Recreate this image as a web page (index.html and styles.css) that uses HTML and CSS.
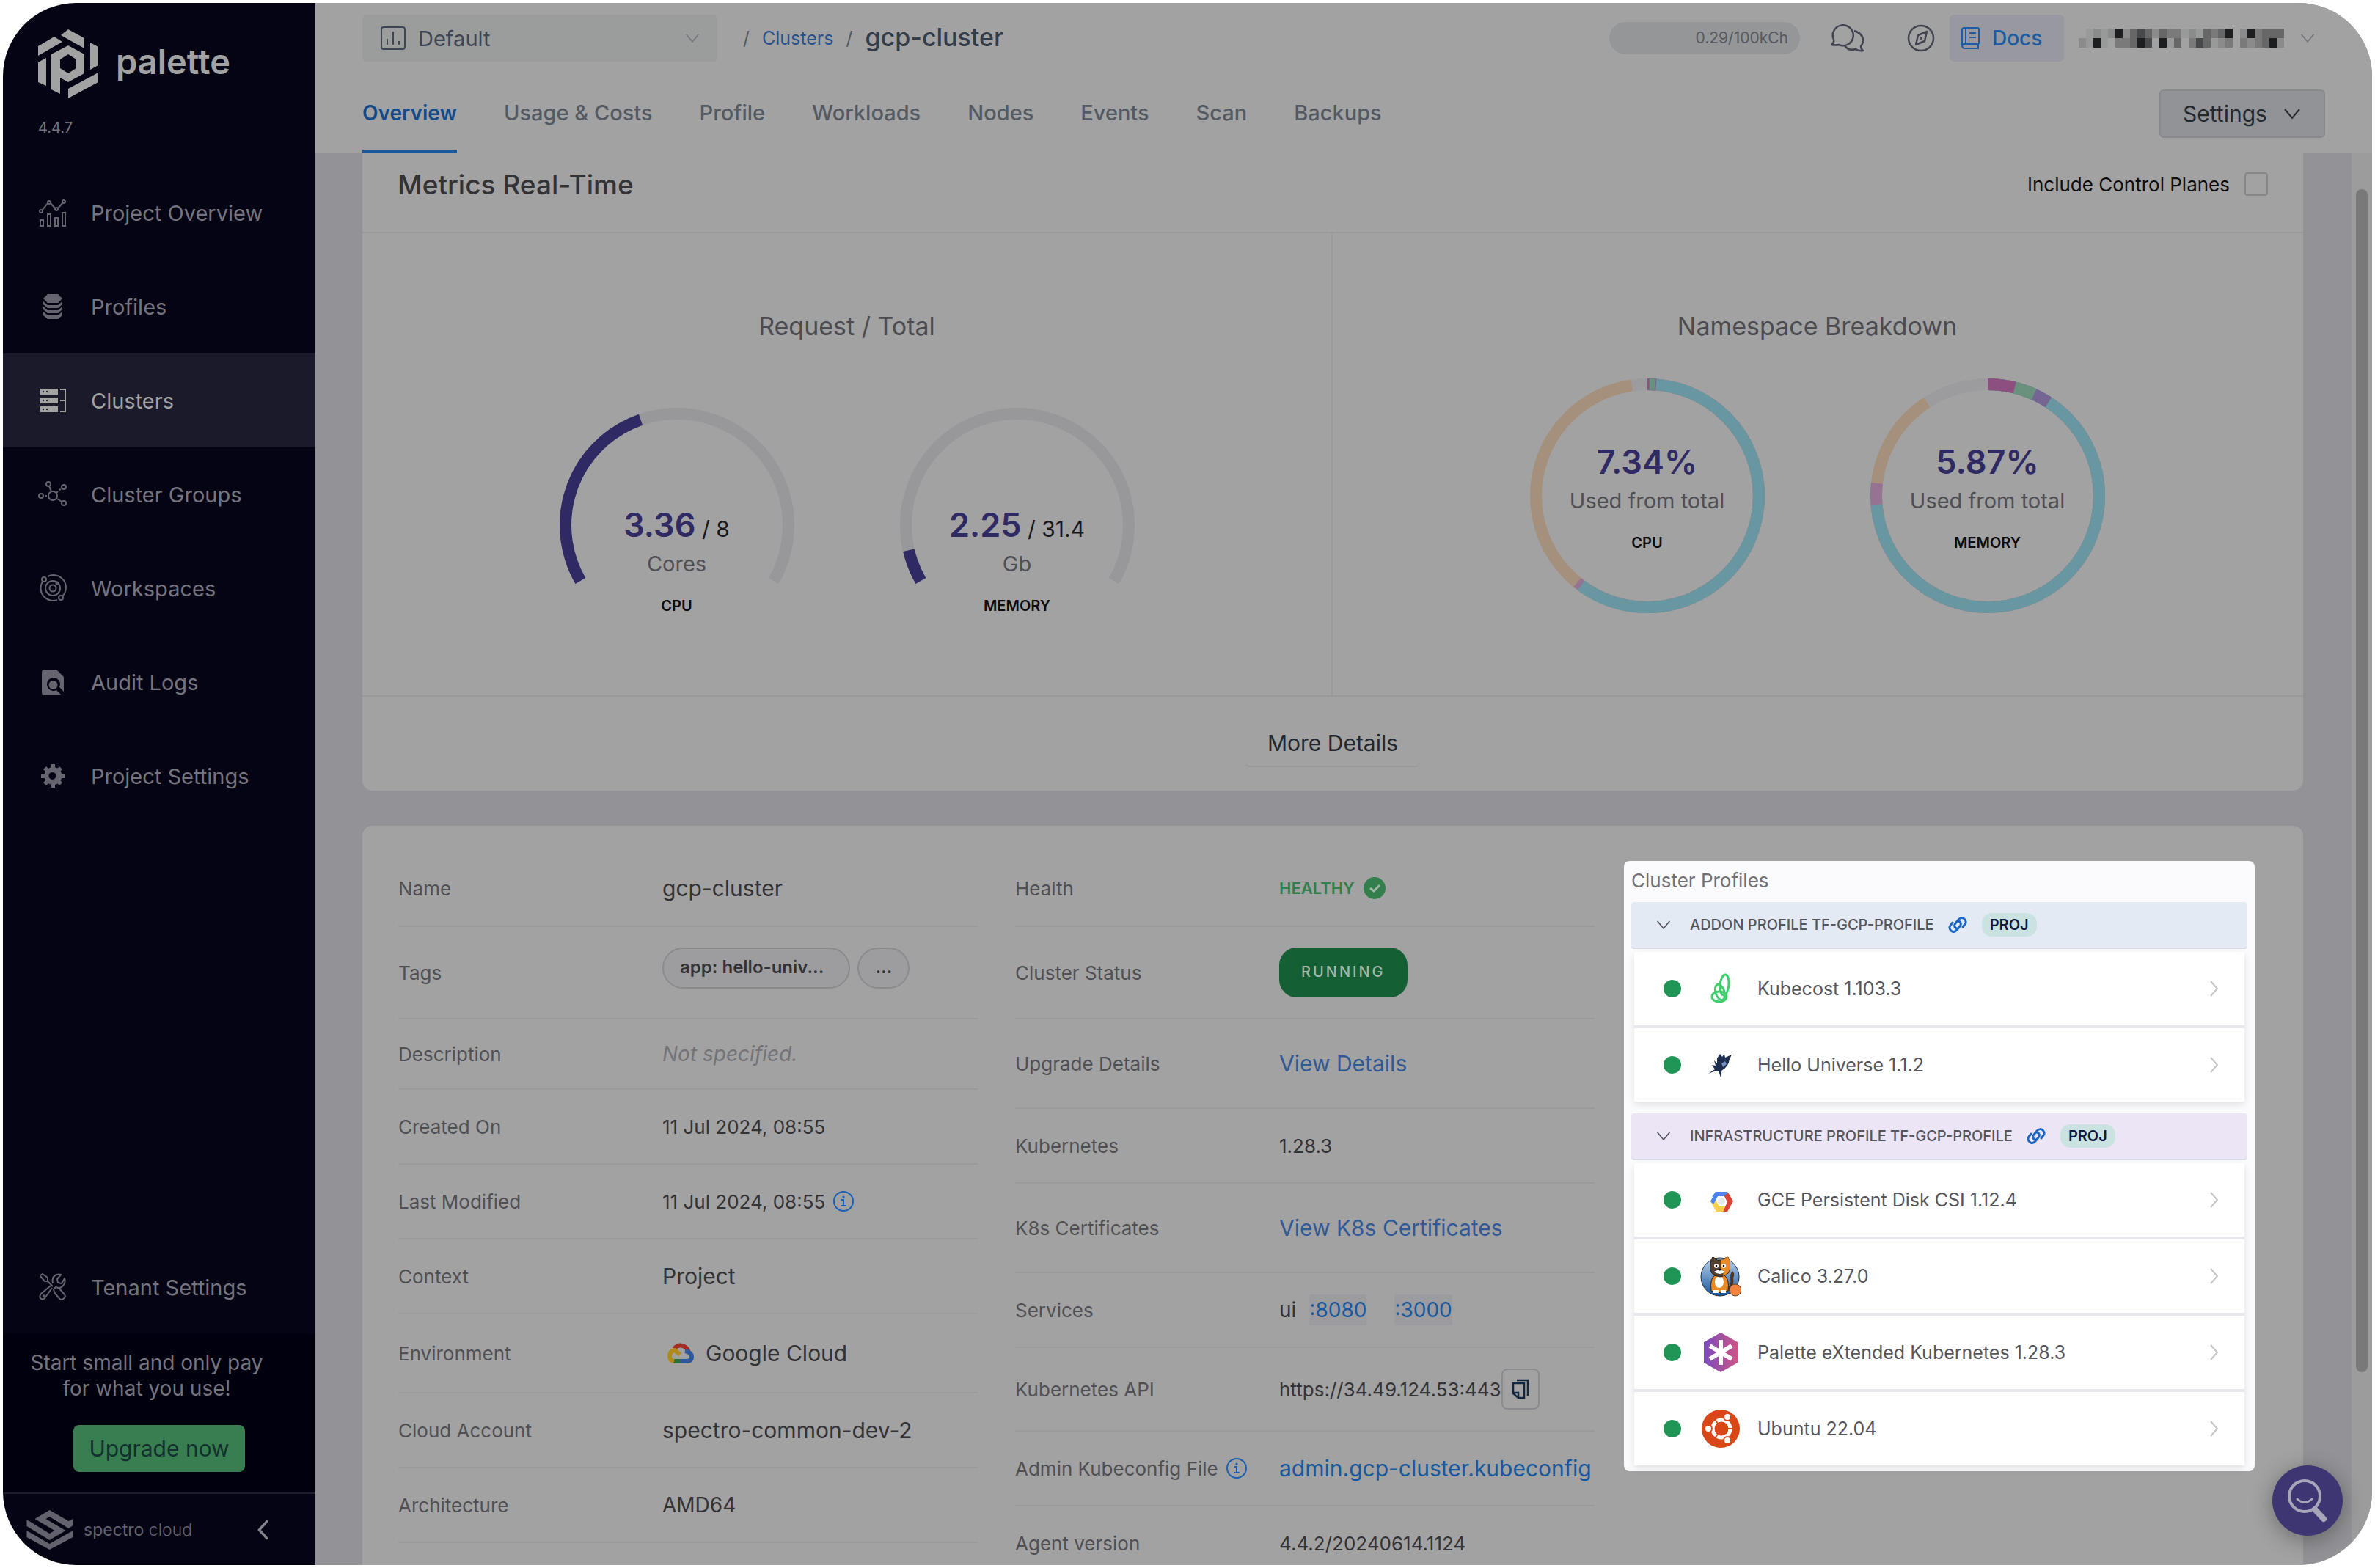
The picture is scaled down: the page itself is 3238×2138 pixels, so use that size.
FILE: index.html
```html
<!DOCTYPE html>
<html lang="en">
<head>
<meta charset="utf-8">
<title>gcp-cluster - Palette</title>
<link rel="stylesheet" href="styles.css">
</head>
<body>
<svg class="sprite" aria-hidden="true">
  <symbol id="chev-down" viewBox="0 0 24 16"><path d="M2 2l10 12L22 2" fill="none" stroke="currentColor" stroke-width="2"/></symbol>
  <symbol id="chev-right" viewBox="0 0 14 24"><path d="M2 2l9 10-9 10" fill="none" stroke="currentColor" stroke-width="2"/></symbol>
  <symbol id="info" viewBox="0 0 30 30"><g fill="none" stroke="currentColor" stroke-width="2"><circle cx="15" cy="15" r="13"/><path d="M12 13h3v8M11 21h8"/></g><circle cx="15" cy="9" r="1.6" fill="currentColor"/></symbol>
  <symbol id="link" viewBox="0 0 28 22"><g fill="none" stroke="currentColor" stroke-width="3" stroke-linecap="round"><path d="M13 16c-4-1-4-5-2-7l4-5c3-3 6-3 8-1s3 5 1 7l-3 4"/><path d="M15 6c4 1 4 5 2 7l-4 5c-3 3-6 3-8 1s-3-5-1-7l3-4"/></g></symbol>
</svg>
<div class="app">
  <aside class="sidebar">
    <div class="brand">
      <svg class="brand-mark" viewBox="0 0 82 94" fill="currentColor" fill-rule="evenodd"><path d="M41 0l22 12v14L31 8zM22 10l11 7L0 36V23zM71 18l11 6v25l-11 6zM82 59v13L41 94V81zM0 45l11-6v38L0 72zM41 22l22 12v26L41 72l-11-6v22l-12-6V34zM41 34l-11 7v12l11 7 11-7V41z"/></svg>
      <span class="brand-name">palette</span>
    </div>
    <div class="version">4.4.7</div>
    <nav class="menu">
      <a href="#"><svg viewBox="0 0 40 40" fill="none" stroke="currentColor" stroke-width="2"><path d="M3 30h4v8H3zM13 22h4v16h-4zM23 27h4v11h-4zM33 20h4v18h-4zM6 16l7-9M17 7l6 7M27 14l7-8"/><circle cx="4" cy="18" r="2"/><circle cx="15" cy="6" r="2"/><circle cx="25" cy="15" r="2"/><circle cx="35" cy="5" r="2"/></svg>Project Overview</a>
      <a href="#"><svg viewBox="0 0 40 40" fill="currentColor"><path d="M13 3h14l6 6-6 6H13L7 9zM7 13l6 5h14l6-5v4l-6 5H13l-6-5zM7 20l6 5h14l6-5v4l-6 5H13l-6-5zM7 27l6 5h14l6-5v5l-6 5H13l-6-5z"/></svg>Profiles</a>
      <a href="#" class="on"><svg viewBox="0 0 40 40"><path fill="currentColor" fill-rule="evenodd" d="M3 4h24v8H3zM6 7v2h2V7zM11 7v2h2V7zM3 16h24v8H3zM6 19v2h2v-2zM11 19v2h2v-2zM3 28h24v8H3zM6 31v2h2v-2zM11 31v2h2v-2z"/><path d="M30 5h7v30h-7M30 20h7" fill="none" stroke="currentColor" stroke-width="2"/></svg>Clusters</a>
      <a href="#"><svg viewBox="0 0 40 40" fill="none" stroke="currentColor" stroke-width="2"><circle cx="20" cy="22" r="6"/><circle cx="4" cy="22" r="3"/><circle cx="14" cy="6" r="3"/><circle cx="35" cy="10" r="3"/><circle cx="35" cy="32" r="3"/><path d="M9 22h3M15 9l3 7M26 26l6 4M25 18l2-2M29 14l2-1"/></svg>Cluster Groups</a>
      <a href="#"><svg viewBox="0 0 40 40" fill="none" stroke="currentColor" stroke-width="2"><circle cx="20" cy="20" r="4.500"/><circle cx="20" cy="20" r="10"/><path d="M13 4a17 17 0 0 1 20 27M26 36A17 17 0 0 1 6 11"/><circle cx="8" cy="8" r="3"/><circle cx="31" cy="33" r="3"/><circle cx="26" cy="13" r="1.500"/></svg>Workspaces</a>
      <a href="#"><svg viewBox="0 0 40 40"><path fill="currentColor" fill-rule="evenodd" d="M9 3h16l10 10v20l-6-6a9 9 0 1 0-4 4l7 7H9q-4 0-4-4V7q0-4 4-4zM20 18a6 6 0 1 0 1 0z"/></svg>Audit Logs</a>
      <a href="#"><svg viewBox="0 0 40 40"><g fill="currentColor"><path fill-rule="evenodd" d="M20 8a12 12 0 1 0 1 0zM20 15a5 5 0 1 1-1 0z"/><path d="M17 4h6v6h-6zM17 30h6v6h-6zM4 17h6v6H4zM30 17h6v6h-6zM7 11l4-4 4 4-4 4zM25 11l4-4 4 4-4 4zM7 29l4-4 4 4-4 4zM25 29l4-4 4 4-4 4z"/></g></svg>Project Settings</a>
    </nav>
    <nav class="menu menu-end">
      <a href="#"><svg viewBox="0 0 40 40" fill="none" stroke="currentColor" stroke-width="2" stroke-linejoin="round"><path d="M3 4l3-2 7 5v5l7 7M13 12H9L3 5M21 23l3-3 4 1 8 9q2 3-1 5.500t-5.500 0.500l-7-8zM19 21L9 35q-3 3-5.500 0.500T4 29l13-11M20 15q-2-9 5-12 4-1 6-0l-5 6 1 5 5 1 4-7q2 6-2 10t-8 4"/><circle cx="8" cy="32" r=".8"/></svg>Tenant Settings</a>
    </nav>
    <div class="promo">
      <p>Start small and only pay<br>for what you use!</p>
      <button type="button" class="upgrade">Upgrade now</button>
    </div>
    <div class="company">
      <svg viewBox="0 0 63 54" class="company-mark"><path fill="currentColor" d="M31 0L11 12l27 16-7 4L0 13v9l31 19 22-13-27-16 5-3 26 16 6-4V12l-6 3zM0 28v9l31 17 32-17v-9L31 46z"/></svg>
      <span class="company-name">spectro <span>cloud</span></span>
      <button type="button" class="collapse" aria-label="Collapse menu"><svg viewBox="0 0 14 24"><path d="M12 2L3 12l9 10" fill="none" stroke="currentColor" stroke-width="3" stroke-linecap="round"/></svg></button>
    </div>
  </aside>

  <main class="main">
    <header class="top">
      <div class="bar">
        <div class="project">
          <svg viewBox="0 0 36 34" fill="none" stroke="currentColor" stroke-width="2" class="project-icon"><rect x="2" y="2" width="32" height="30" rx="3"/><path d="M10 18v8M18 8v18M26 21v5"/></svg>
          <select aria-label="Project"><option>Default</option></select>
          <svg class="chev chev-s faint"><use href="#chev-down"/></svg>
        </div>
        <nav class="crumbs"><span>/</span><a href="#">Clusters</a><span>/</span><strong>gcp-cluster</strong></nav>
        <div class="tools">
          <span class="quota">0.29/100kCh</span>
          <button type="button" class="icon-btn chat" aria-label="Chat"><svg viewBox="0 0 46 38" fill="none" stroke="currentColor" stroke-width="2.500" stroke-linejoin="round"><path d="M1 28q4-3 3-7a14 14 0 1 1 7 7q-4 1-10 0zM32 9q13 4 12 15-1 4-3 6 0 4 3 6-6 1-10-2-10 3-15-5"/></svg></button>
          <button type="button" class="icon-btn compass" aria-label="Explore"><svg viewBox="0 0 38 38" fill="none" stroke="currentColor" stroke-width="2.500"><circle cx="19" cy="19" r="17"/><path d="M27 10l-3 13-12 5 3-13z" stroke-linejoin="round"/><circle cx="19" cy="19" r=".8"/></svg></button>
          <a href="#" class="docs"><svg viewBox="0 0 26 30" fill="none" stroke="currentColor" stroke-width="2"><path d="M24 23V3q0-2-2-2H4Q1 1 1 4v21q0 4 4 4h19M6 2v20M24 23H4q-3 0-3 3M23 23v6M11 8h9M11 14h9"/></svg>Docs</a>
          <svg class="user" viewBox="0 0 28 2" preserveAspectRatio="none" shape-rendering="crispEdges" role="img" aria-label="User"><path fill="#989999" d="M1 0h1v1H1zM1 1h1v1H1zM3 1h1v1H3zM12 1h1v1h-1zM14 0h1v1h-1zM16 0h1v1h-1zM18 1h1v1h-1zM3 0h1v1H3z"/><path fill="#8b8b8c" d="M0 1h1v1H0zM2 0h1v1H2zM4 0h1v1H4zM6 0h1v1H6zM10 0h1v1h-1zM15 0h1v1h-1zM19 1h1v1h-1zM22 0h1v1h-1zM23 1h1v1h-1zM27 1h1v1h-1z"/><path fill="#7a7a7b" d="M5 1h2v1H5zM12 0h2v1h-2zM15 1h1v1h-1zM18 0h1v1h-1zM20 1h1v1h-1zM22 1h1v1h-1zM24 0h1v2h-1z"/><path fill="#676768" d="M7 0h1v2H7zM9 0h1v1H9zM11 0h1v1h-1zM13 1h1v1h-1zM17 0h1v2h-1zM19 0h1v1h-1zM25 0h1v2h-1zM26 0h2v1h-2z"/><path fill="#48494a" d="M8 0h1v1H8zM9 1h1v1H9zM16 1h1v1h-1z"/><path fill="#1d1e1f" d="M5 0h1v1H5zM2 1h1v1H2zM8 1h1v1H8zM11 1h1v1h-1zM20 0h1v1h-1zM23 0h1v1h-1zM26 1h1v1h-1z"/></svg>
          <svg class="chev chev-s faint"><use href="#chev-down"/></svg>
        </div>
      </div>
      <div class="tabs-row">
        <nav class="tabs">
          <a href="#" class="on">Overview</a><a href="#">Usage &amp; Costs</a><a href="#">Profile</a><a href="#">Workloads</a><a href="#">Nodes</a><a href="#">Events</a><a href="#">Scan</a><a href="#">Backups</a>
        </nav>
        <button type="button" class="settings">Settings<svg class="chev"><use href="#chev-down"/></svg></button>
      </div>
    </header>

    <div class="scroll">
      <div class="content">
        <section class="card metrics">
          <div class="metrics-head"><h2>Metrics Real-Time</h2><label class="check">Include Control Planes<input type="checkbox"></label></div>
          <div class="metrics-body">
            <div class="half">
              <h3>Request / Total</h3>
              <div class="dials">
                <div class="dial gauge">
                  <svg viewBox="0 0 320 320" fill="none" stroke-width="16"><g transform="rotate(150 160 160)"><circle cx="160" cy="160" r="152" pathLength="360" stroke="#98989b" stroke-dasharray="240 120"/><circle cx="160" cy="160" r="152" pathLength="360" stroke="#2f2a63" stroke-dasharray="101 259"/></g></svg>
                  <div class="dial-text"><p class="num"><b>3.36</b> / 8</p><p class="unit">Cores</p><p class="kind">CPU</p></div>
                </div>
                <div class="dial gauge">
                  <svg viewBox="0 0 320 320" fill="none" stroke-width="16"><g transform="rotate(150 160 160)"><circle cx="160" cy="160" r="152" pathLength="360" stroke="#98989b" stroke-dasharray="240 120"/><circle cx="160" cy="160" r="152" pathLength="360" stroke="#2f2a63" stroke-dasharray="17 343"/></g></svg>
                  <div class="dial-text"><p class="num"><b>2.25</b> / 31.4</p><p class="unit">Gb</p><p class="kind">MEMORY</p></div>
                </div>
              </div>
            </div>
            <div class="half">
              <h3>Namespace Breakdown</h3>
              <div class="dials dials-ring">
                <div class="dial">
                  <svg viewBox="0 0 320 320" fill="none" stroke-width="16"><g transform="rotate(-90 160 160)"><circle cx="160" cy="160" r="152" stroke="#9c9c9f"/><circle cx="160" cy="160" r="152" pathLength="360" stroke="#a5917b" stroke-dasharray="352 8"/><circle cx="160" cy="160" r="152" pathLength="360" stroke="#967393" stroke-dasharray="219 141"/><circle cx="160" cy="160" r="152" pathLength="360" stroke="#6897a1" stroke-dasharray="216.500 143.500"/><circle cx="160" cy="160" r="152" pathLength="360" stroke="#756593" stroke-dasharray="4.500 355.500"/><circle cx="160" cy="160" r="152" pathLength="360" stroke="#6a917d" stroke-dasharray="4 356"/><circle cx="160" cy="160" r="152" pathLength="360" stroke="#8c4f80" stroke-dasharray="1 359"/></g></svg>
                  <div class="dial-text"><p class="num"><b>7.34%</b></p><p class="unit">Used from total</p><p class="kind">CPU</p></div>
                </div>
                <div class="dial">
                  <svg viewBox="0 0 320 320" fill="none" stroke-width="16"><g transform="rotate(-90 160 160)"><circle cx="160" cy="160" r="152" stroke="#9c9c9f"/><circle cx="160" cy="160" r="152" pathLength="360" stroke="#a5917b" stroke-dasharray="327 33"/><circle cx="160" cy="160" r="152" pathLength="360" stroke="#967393" stroke-dasharray="276.500 83.500"/><circle cx="160" cy="160" r="152" pathLength="360" stroke="#6897a1" stroke-dasharray="265.500 94.500"/><circle cx="160" cy="160" r="152" pathLength="360" stroke="#756593" stroke-dasharray="33 327"/><circle cx="160" cy="160" r="152" pathLength="360" stroke="#6a917d" stroke-dasharray="24.500 335.500"/><circle cx="160" cy="160" r="152" pathLength="360" stroke="#8c4f80" stroke-dasharray="14 346"/></g></svg>
                  <div class="dial-text"><p class="num"><b>5.87%</b></p><p class="unit">Used from total</p><p class="kind">MEMORY</p></div>
                </div>
              </div>
            </div>
          </div>
          <div class="metrics-foot"><button type="button">More Details</button></div>
        </section>

        <section class="card details">
          <dl class="facts">
            <div class="h104"><dt>Name</dt><dd>gcp-cluster</dd></div>
            <div class="h126"><dt>Tags</dt><dd class="tags"><span class="tag-wide">app: hello-univ...</span><span>...</span></dd></div>
            <div class="h96"><dt>Description</dt><dd class="none">Not specified.</dd></div>
            <div><dt>Created On</dt><dd class="digits">11 Jul 2024, 08:55</dd></div>
            <div><dt>Last Modified</dt><dd class="digits">11 Jul 2024, 08:55<svg class="info"><use href="#info"/></svg></dd></div>
            <div><dt>Context</dt><dd>Project</dd></div>
            <div class="h108"><dt>Environment</dt><dd><svg class="gcp" viewBox="0 0 36 28" fill="none" stroke-width="6"><path stroke="#a62c23" d="M9 8q6-7 14-3 5 3 6 8"/><path stroke="#2c579b" d="M24 11q9 2 9 8t-7 6h-8"/><path stroke="#27713c" d="M18 25H8"/><path stroke="#b18a1c" d="M9 25q-6-1-6-7 0-7 7-8l7 6"/></svg>Google Cloud</dd></div>
            <div><dt>Cloud Account</dt><dd>spectro-common-dev-2</dd></div>
            <div><dt>Architecture</dt><dd class="mid">AMD64</dd></div>
          </dl>
          <dl class="facts">
            <div class="h104"><dt>Health</dt><dd class="healthy">HEALTHY<svg viewBox="0 0 30 30"><circle cx="15" cy="15" r="15" fill="#327f4b"/><path d="M9 15l5 4 8-8" fill="none" stroke="#a0b5a6" stroke-width="3"/></svg></dd></div>
            <div class="h126"><dt>Cluster Status</dt><dd><span class="running">RUNNING</span></dd></div>
            <div class="h122"><dt>Upgrade Details</dt><dd><a href="#" class="soft">View Details</a></dd></div>
            <div><dt>Kubernetes</dt><dd class="digits">1.28.3</dd></div>
            <div class="h122"><dt>K8s Certificates</dt><dd><a href="#" class="soft">View K8s Certificates</a></dd></div>
            <div><dt>Services</dt><dd class="ports mid">ui<a href="#">:8080</a><a href="#">:3000</a></dd></div>
            <div class="h114"><dt>Kubernetes API</dt><dd class="digits">https://34.49.124.53:443<button type="button" class="copy" aria-label="Copy"><svg viewBox="0 0 24 28" fill="none" stroke="currentColor" stroke-width="2.500"><path d="M2 6h15v20H9l-7-6zM7 2h15v21M2 19h7v7"/></svg></button></dd></div>
            <div><dt>Admin Kubeconfig File<svg class="info"><use href="#info"/></svg></dt><dd><a href="#">admin.gcp-cluster.kubeconfig</a></dd></div>
            <div><dt>Agent version</dt><dd class="digits">4.4.2/20240614.1124</dd></div>
          </dl>
          <aside class="profiles">
            <h4>Cluster Profiles</h4>
            <section class="group">
              <header class="blue"><svg class="chev chev-s"><use href="#chev-down"/></svg><span>ADDON PROFILE TF-GCP-PROFILE</span><svg class="link"><use href="#link"/></svg><em>PROJ</em></header>
              <ul>
                <li><i></i><svg class="pack" viewBox="0 0 56 56" fill="none" stroke="#3fce6c" stroke-width="3"><ellipse cx="33" cy="23" rx="6" ry="14" transform="rotate(6 33 23)"/><ellipse cx="27" cy="33" rx="6" ry="11" transform="rotate(-18 27 33)"/><ellipse cx="26" cy="39" rx="10" ry="7"/></svg><a href="#">Kubecost 1.103.3</a><svg class="go"><use href="#chev-right"/></svg></li>
                <li><i></i><svg class="pack" viewBox="0 0 56 56" fill="#1d2d50"><path d="M23 19l4-6 3 4 3-4 1 5 9-4-3 6q-1 10-11 16l-1 9-3-9-6 1-8 3 9-6-4-6 5 1-2-7 4 4z"/><path fill="#6c8fc0" d="M29 26l5-3 2 4-5 4z"/></svg><a href="#">Hello Universe 1.1.2</a><svg class="go"><use href="#chev-right"/></svg></li>
              </ul>
            </section>
            <section class="group">
              <header class="violet"><svg class="chev chev-s"><use href="#chev-down"/></svg><span>INFRASTRUCTURE PROFILE TF-GCP-PROFILE</span><svg class="link"><use href="#link"/></svg><em>PROJ</em></header>
              <ul>
                <li><i></i><svg class="pack" viewBox="0 0 56 56"><path fill="#4a86ee" d="M21 17h16l6 12-6 1-4-7H20l-4 1z"/><path fill="#db4437" d="M38 18l7 12-8 14h-6l6-13-4-8z"/><path fill="#f6cf4c" d="M14 30l4-7 8 14h8l-3 7h-9z"/><path fill="#4a86ee" d="M21 17l-7 13 4 4 6-11z"/><circle cx="29" cy="30" r="5" fill="#e6e8ea"/></svg><a href="#">GCE Persistent Disk CSI 1.12.4</a><svg class="go"><use href="#chev-right"/></svg></li>
                <li><i></i><svg class="pack" viewBox="0 0 56 56"><defs><linearGradient id="sky" x1="0" y1="0" x2="0" y2="1"><stop offset="0" stop-color="#bcd4ee"/><stop offset="1" stop-color="#18569c"/></linearGradient></defs><circle cx="27" cy="29" r="26" fill="url(#sky)" stroke="#222b38"/><path d="M36 46q7-6 5-16 0-6 3-9 4 4 1 9 2 9-5 18z" fill="#4a3527"/><path d="M15 48q-2-17 5-21h13q7 5 5 21-12 5-23 0z" fill="#e98a26" stroke="#2b2018"/><ellipse cx="26" cy="36" rx="6" ry="8" fill="#fff"/><path d="M14 12q0-7 3-10 4 1 6 4h8q3-4 7-4 3 5 2 10 3 15-13 17-16-2-13-17z" fill="#53402f" stroke="#2b2018"/><path d="M28 6h3q3-4 7-4 3 5 2 10 2 12-9 16l1-7-4-3z" fill="#e98a26"/><circle cx="22" cy="14" r="3" fill="#fff"/><circle cx="32" cy="14" r="3" fill="#fff"/><circle cx="22" cy="14" r="1.300"/><circle cx="32" cy="14" r="1.300"/><path d="M19 22q7-5 15 0-7 6-15 0z" fill="#fff"/><path d="M24 18h5l-2 3z"/><path d="M18 47h7v4h-7zM28 47h7v4h-7z" fill="#fff"/><circle cx="48" cy="47" r="8" fill="#f2833f" stroke="#6b4a2c"/></svg><a href="#">Calico 3.27.0</a><svg class="go"><use href="#chev-right"/></svg></li>
                <li><i></i><svg class="pack" viewBox="0 0 56 56"><defs><linearGradient id="pxk"><stop offset="0" stop-color="#7a4bbd"/><stop offset="1" stop-color="#cc5585"/></linearGradient></defs><path d="M28 1l23 13v28L28 55 5 42V14z" fill="url(#pxk)"/><path d="M28 11v34M13 19l30 18M13 37l30-18" stroke="#fff" stroke-width="6"/></svg><a href="#">Palette eXtended Kubernetes 1.28.3</a><svg class="go"><use href="#chev-right"/></svg></li>
                <li><i></i><svg class="pack" viewBox="0 0 56 56"><circle cx="28" cy="28" r="26" fill="#d94718"/><circle cx="29" cy="28" r="12" fill="none" stroke="#fff" stroke-width="5"/><g fill="#fff" stroke="#d94718" stroke-width="2"><circle cx="11" cy="28" r="5"/><circle cx="37" cy="12" r="5"/><circle cx="37" cy="44" r="5"/></g><path d="M29 28h16M29 28l-9-13M29 28l-9 13" stroke="#d94718" stroke-width="2"/><circle cx="29" cy="28" r="9" fill="#d94718"/></svg><a href="#">Ubuntu 22.04</a><svg class="go"><use href="#chev-right"/></svg></li>
              </ul>
            </section>
          </aside>
        </section>
      </div>
      <div class="track"><div class="thumb"></div></div>
    </div>
    <button type="button" class="fab" aria-label="Search"><svg viewBox="0 0 56 60" fill="none" stroke="#a7a5b8" stroke-linecap="round"><circle cx="24" cy="24" r="21" stroke-width="4"/><path d="M14 28q10 9 20 0" stroke-width="3"/><path d="M38 42l12 13" stroke-width="8"/></svg></button>
  </main>
</div>
</body>
</html>
```
FILE: styles.css
```css
* { box-sizing: border-box; margin: 0; padding: 0; }
body { background: #fff; font-family: Inter, "Liberation Sans", sans-serif; font-size: 30px; color: #333336; }
a { color: inherit; text-decoration: none; }
button { font: inherit; color: inherit; background: none; border: 0; }
svg { display: block; flex: none; }
ul { list-style: none; }
.sprite { position: absolute; width: 0; height: 0; }

.app { height: calc(100vh - 8px); margin: 4px; display: flex; border-radius: 100px; overflow: hidden; }

/* Sidebar */
.sidebar { flex: 0 0 426px; display: flex; flex-direction: column; background: #050414; color: #75747e; }
.brand { display: flex; align-items: center; gap: 24px; padding: 36px 48px 0; color: #a2a2a3; }
.brand-mark { width: 82px; height: 94px; }
.brand-name { font-size: 47px; line-height: 56px; font-weight: 600; padding-bottom: 6px; }
.version { padding: 24px 48px 4px; font-size: 20px; line-height: 32px; }
.menu { padding-top: 32px; }
.menu a { display: flex; align-items: center; gap: 32px; height: 128px; padding-left: 48px; font-size: 29px; }
.menu svg { width: 40px; height: 40px; color: #65646f; }
.menu .on { background: #1b1a2b; color: #a2a2a3; }
.menu .on svg { color: #a2a2a3; }
.menu-end { margin-top: auto; padding: 0; }
.promo { background: #00000e; height: 218px; padding: 22px 0 0; text-align: center; border-bottom: 2px solid #1e1d2e; }
.promo p { font-size: 28px; line-height: 35px; padding-right: 34px; }
.upgrade { margin-top: 32px; width: 234px; height: 64px; border-radius: 8px; background: #387e50; color: #14302f; }
.company { height: 97px; display: flex; align-items: center; padding-left: 32px; color: #62616c; }
.company-mark { width: 64px; height: 54px; }
.company-name { margin-left: 14px; font-size: 23px; }
.company-name span { font-weight: 300; }
.collapse { margin-left: 88px; color: #85848c; }
.collapse svg { width: 16px; height: 28px; }

/* Header */
.main { position: relative; flex: 1; min-width: 0; display: flex; flex-direction: column; background: #939397; }
.top { background: #a2a2a3; padding: 16px 64px 0; }
.bar { display: flex; align-items: center; height: 64px; }
.project { display: flex; align-items: center; width: 484px; height: 64px; padding: 0 24px; background: #9b9c9c; border-radius: 6px; color: #3e4654; }
.project-icon { width: 36px; height: 34px; }
.project select { flex: 1; appearance: none; border: 0; background: none; font: inherit; font-size: 29px; color: inherit; padding-left: 16px; }
.chev { width: 26px; height: 16px; }
.chev-s { width: 20px; height: 14px; }
.faint { color: #72757b; }
.crumbs { display: flex; align-items: center; gap: 17px; margin-left: 35px; font-size: 25px; color: #55585e; }
.crumbs a { color: #28528c; }
.crumbs strong { font-size: 34px; line-height: 40px; padding-bottom: 2px; font-weight: 500; color: #333d4a; }
.tools { margin-left: auto; display: flex; align-items: center; }
.quota { width: 260px; height: 44px; border-radius: 22px; background: #949698; color: #565a60; font-size: 21px; line-height: 44px; text-align: right; padding-right: 16px; }
.icon-btn { color: #41434e; }
.chat { margin-left: 42px; }
.chat svg { width: 46px; height: 38px; }
.compass { margin: 0 20px 0 58px; }
.compass svg { width: 38px; height: 38px; }
.docs { display: flex; align-items: center; gap: 16px; width: 156px; height: 64px; padding-left: 16px; background: #9798a0; border-radius: 6px; color: #1c5ca3; font-size: 28px; font-weight: 500; }
.docs svg { width: 26px; height: 30px; }
.user { width: 280px; height: 26px; margin: 0 22px 0 20px; }
.tools > .chev { margin-right: 14px; }
.tabs-row { display: flex; align-items: flex-end; justify-content: space-between; height: 124px; }
.tabs { display: flex; gap: 64px; }
.tabs a { height: 103px; line-height: 100px; font-size: 29px; font-weight: 500; color: #535a62; margin-bottom: 1px; }
.tabs .on { height: 104px; margin: 0; color: #134a8a; border-bottom: 4px solid #17599b; font-weight: 600; font-size: 28px; }
.settings { display: flex; align-items: center; justify-content: space-between; width: 226px; height: 66px; padding: 0 30px; margin-bottom: 20px; background: #929396; border: 2px solid #88898c; border-radius: 6px; color: #23282f; }

/* Scrolling area */
.scroll { flex: 1; min-height: 0; display: flex; }
.content { flex: 1; min-width: 0; overflow: hidden; padding: 0 66px 0 64px; }
.track { flex: 0 0 28px; background: #9c9c9d; padding: 50px 6px 0; }
.thumb { height: 86%; border-radius: 8px; background: #79797a; }
.card { background: #a2a2a3; border-radius: 14px; }

.metrics { border-radius: 0 0 14px 14px; }
.metrics-head { display: flex; align-items: center; justify-content: space-between; height: 110px; padding: 0 48px 22px; border-bottom: 2px solid #99999c; }
h2 { font-size: 37px; font-weight: 500; }
.check { display: flex; align-items: center; gap: 20px; font-size: 26px; color: #0c0c0d; }
.check input { appearance: none; width: 32px; height: 32px; border: 2px solid #87878a; border-radius: 4px; }
.metrics-body { display: grid; grid-template-columns: 1fr 1fr; height: 632px; border-bottom: 2px solid #99999c; }
.half { padding-top: 104px; text-align: center; border-right: 2px solid #9a9a9d; }
.half + .half { border-color: transparent; }
h3 { font-size: 34px; line-height: 46px; font-weight: 400; color: #4c4c50; }
.dials { display: flex; justify-content: center; gap: 144px; padding-top: 88px; }
.dials-ring { padding-top: 48px; }
.dial { display: grid; width: 320px; }
.dial > * { grid-area: 1 / 1; }
.dial svg { width: 320px; height: 320px; }
.dial-text { padding-top: 86px; }
.gauge .dial-text { padding-top: 132px; }
.num { font-size: 30px; line-height: 56px; color: #18181b; }
.num b { font-size: 45px; font-weight: 600; color: #2f2a63; }
.unit { font-size: 29px; line-height: 40px; color: #505054; }
.kind { margin-top: 19px; font-size: 20px; line-height: 36px; font-weight: 600; color: #0c0c0d; }
.metrics-foot { height: 128px; display: flex; justify-content: center; align-items: center; }
.metrics-foot button { width: 238px; height: 64px; color: #23282f; border-bottom: 2px solid #98989b; border-radius: 6px; }

/* Cluster facts */
.details { margin-top: 48px; padding: 34px 66px 0 49px; display: grid; grid-template-columns: 801fr 790fr 860fr; gap: 40px; align-items: start; }
.facts > div { display: flex; align-items: center; height: 102px; border-bottom: 2px solid #9a9a9c; }
.facts:first-child { padding-right: 11px; }
.facts dt { flex: 0 0 360px; display: flex; align-items: center; font-size: 26px; color: #505054; }
.facts dd { flex: 1; display: flex; align-items: center; white-space: nowrap; }
.facts .digits { font-size: 26px; }
.facts .mid { font-size: 28px; }
.facts .h96 { height: 96px; }
.facts .h104 { height: 104px; }
.facts .h108 { height: 108px; }
.facts .h114 { height: 114px; }
.facts .h122 { height: 122px; }
.facts .h126 { height: 126px; }
.facts dd a { color: #17599f; }
.facts dd .soft { color: #315a95; }
.info { width: 30px; height: 30px; margin-left: 10px; color: #1e5fb0; }
.tags { gap: 10px; }
.tags span { height: 56px; line-height: 50px; padding: 0 22px; border: 2px solid #8b8b8e; border-radius: 28px; background: #9d9d9f; font-size: 24px; font-weight: 600; margin-bottom: 12px; }
.tags .tag-wide { padding-right: 34px; }
.facts .none { font-size: 28px; font-style: italic; color: #747477; }
.gcp { width: 36px; height: 28px; margin: 0 16px 0 7px; }
.facts .healthy { font-size: 22px; font-weight: 600; color: #327f4b; }
.healthy svg { width: 30px; height: 30px; margin-left: 12px; }
.running { height: 68px; line-height: 66px; padding: 0 30px; border-radius: 24px; background: #145f33; color: #a3b8a8; font-size: 20px; font-weight: 500; letter-spacing: 3px; }
.ports a { margin-left: 18px; background: #9c9ca0; line-height: 42px; }
.ports a + a { margin-left: 38px; }
.copy { display: grid; place-items: center; width: 52px; height: 56px; border: 2px solid #8b8b8f; border-radius: 8px; color: #13263f; }
.copy svg { width: 24px; height: 28px; }

/* Cluster profiles panel */
.profiles { margin-top: 14px; background: #fbfafc; border-radius: 8px; padding: 0 10px 8px; color: #55565c; }
h4 { height: 56px; font-size: 26px; line-height: 54px; font-weight: 400; color: #717176; }
.group + .group { margin-top: 16px; }
.group header { display: flex; align-items: center; height: 64px; padding-left: 34px; border-radius: 4px; border-bottom: 2px solid #d6dae4; font-size: 20px; font-weight: 500; }
.blue { background: #e3eaf4; }
.violet { background: #ece5f6; }
.group header span { margin: 0 18px 0 26px; }
.link { width: 28px; height: 22px; color: #1c67c5; }
.group em { margin-left: 19px; height: 32px; line-height: 32px; padding: 0 11px; border-radius: 14px; background: #cbe3e0; color: #0c1a45; font-style: normal; font-weight: 600; }
.group ul { margin: 4px 4px 0; display: grid; gap: 4px; background: #e8e8ec; box-shadow: 0 4px 10px #0000001c; }
.group li { display: flex; align-items: center; height: 100px; padding: 0 34px 0 40px; background: #fff; font-size: 25px; }
.group i { width: 24px; height: 24px; border-radius: 50%; background: #209556; }
.pack { width: 56px; height: 56px; margin: 0 22px 0 26px; }
.go { width: 14px; height: 24px; margin-left: auto; color: #c4c5ca; }

.fab { position: absolute; right: 40px; bottom: 40px; width: 96px; height: 96px; border-radius: 50%; background: #3e3673; display: grid; place-items: center; box-shadow: 0 6px 30px #00000055; }
.fab svg { width: 56px; height: 60px; }
```
